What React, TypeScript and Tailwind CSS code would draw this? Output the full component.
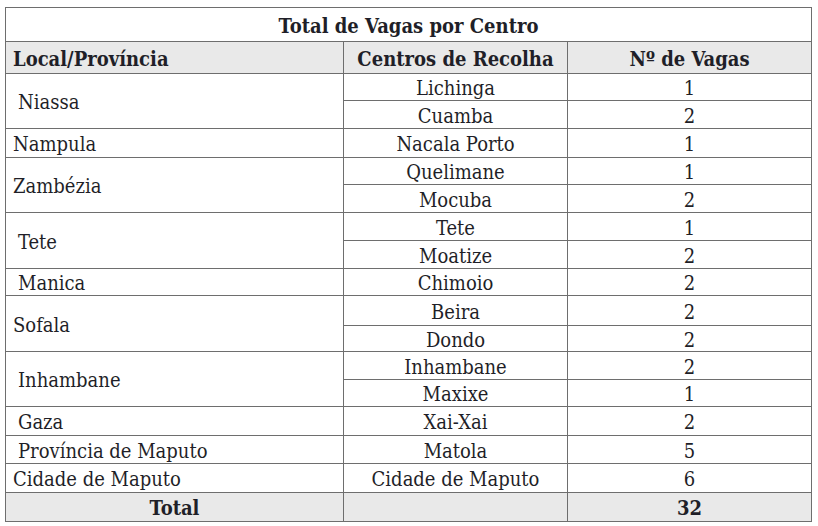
const font = {
  fontFamily: "'DejaVu Serif Condensed', 'DejaVu Serif', 'Liberation Serif', serif",
};

type Row = {
  local?: string;
  localPad?: string;
  span?: number;
  centro: string;
  vagas: string;
  h: string;
};

const rows: Row[] = [
  { local: 'Niassa', localPad: 'pl-[12px]', span: 2, centro: 'Lichinga', vagas: '1', h: 'h-[27px]' },
  { centro: 'Cuamba', vagas: '2', h: 'h-[28px]' },
  { local: 'Nampula', localPad: 'pl-[7px]', span: 1, centro: 'Nacala Porto', vagas: '1', h: 'h-[29px]' },
  { local: 'Zambézia', localPad: 'pl-[7px]', span: 2, centro: 'Quelimane', vagas: '1', h: 'h-[27px]' },
  { centro: 'Mocuba', vagas: '2', h: 'h-[28px]' },
  { local: 'Tete', localPad: 'pl-[12px]', span: 2, centro: 'Tete', vagas: '1', h: 'h-[28px]' },
  { centro: 'Moatize', vagas: '2', h: 'h-[28px]' },
  { local: 'Manica', localPad: 'pl-[12px]', span: 1, centro: 'Chimoio', vagas: '2', h: 'h-[27px]' },
  { local: 'Sofala', localPad: 'pl-[7px]', span: 2, centro: 'Beira', vagas: '2', h: 'h-[30px]' },
  { centro: 'Dondo', vagas: '2', h: 'h-[26px]' },
  { local: 'Inhambane', localPad: 'pl-[12px]', span: 2, centro: 'Inhambane', vagas: '2', h: 'h-[28px]' },
  { centro: 'Maxixe', vagas: '1', h: 'h-[27px]' },
  { local: 'Gaza', localPad: 'pl-[12px]', span: 1, centro: 'Xai-Xai', vagas: '2', h: 'h-[29px]' },
  { local: 'Província de Maputo', localPad: 'pl-[12px]', span: 1, centro: 'Matola', vagas: '5', h: 'h-[28px]' },
  { local: 'Cidade de Maputo', localPad: 'pl-[7px]', span: 1, centro: 'Cidade de Maputo', vagas: '6', h: 'h-[29px]' },
];

const cell = 'border border-[#6e6e6e] p-0 pt-[2px] leading-none';

export default function App() {
  return (
    <div className="w-[818px] h-[526px] bg-white pt-[7px] pl-[5px]" style={font}>
      <table className="border-collapse table-fixed w-[806px] text-[20px] text-[#1f1f28]">
        <colgroup>
          <col className="w-[338px]" />
          <col className="w-[224px]" />
          <col className="w-[244px]" />
        </colgroup>
        <tbody>
          <tr className="h-[34px]">
            <td colSpan={3} className={`${cell} text-center font-bold`}>
              Total de Vagas por Centro
            </td>
          </tr>
          <tr className="h-[32px] bg-[#e9e9e9]">
            <td className={`${cell} pl-[7px] font-bold text-left`}>Local/Província</td>
            <td className={`${cell} text-center font-bold`}>Centros de Recolha</td>
            <td className={`${cell} text-center font-bold`}>Nº de Vagas</td>
          </tr>
          {rows.map((r, i) => (
            <tr key={i} className={r.h}>
              {r.local !== undefined && (
                <td rowSpan={r.span} className={`${cell} ${r.localPad} text-left align-middle`}>
                  {r.local}
                </td>
              )}
              <td className={`${cell} text-center`}>{r.centro}</td>
              <td className={`${cell} text-center`}>{r.vagas}</td>
            </tr>
          ))}
          <tr className="h-[29px] bg-[#e9e9e9]">
            <td className={`${cell} text-center font-bold`}>Total</td>
            <td className={cell}></td>
            <td className={`${cell} text-center font-bold`}>32</td>
          </tr>
        </tbody>
      </table>
    </div>
  );
}
